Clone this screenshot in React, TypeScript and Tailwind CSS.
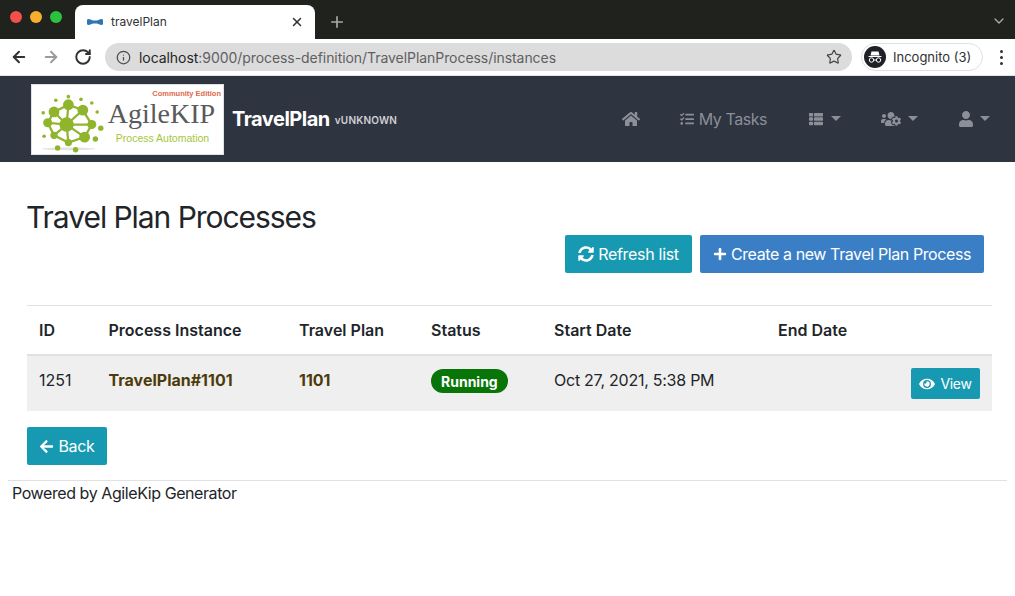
import { FaHome, FaTasks, FaThList, FaUsersCog, FaUser, FaSyncAlt, FaPlus, FaArrowLeft, FaEye } from 'react-icons/fa';
import { ArrowLeft, ArrowRight, RotateCw, Info, Star, X, Plus, ChevronDown } from 'lucide-react';

const columns = [
    { label: 'ID', width: 'w-[69.5px]' },
    { label: 'Process Instance', width: 'w-[190.5px]' },
    { label: 'Travel Plan', width: 'w-[132px]' },
    { label: 'Status', width: 'w-[123px]' },
    { label: 'Start Date', width: 'w-[224px]' },
    { label: 'End Date', width: 'flex-1' },
];

const globeLinks = 'M20 26L36 18L52 24L62 40L54 54L36 60L20 52L13 38Z M36 18L34 40L52 24 M34 40L20 52 M34 40L54 54 M34 40L13 38 M34 40L36 60 M62 40L34 40 M34 40L20 26';

const globeDots = [
    [34, 40, 8], [20, 26, 6], [36, 18, 6], [52, 24, 6], [62, 40, 5], [54, 54, 6], [36, 60, 4], [20, 52, 4],
    [13, 38, 5], [68, 26, 2], [72, 44, 3], [66, 56, 3], [44, 68, 3], [24, 66, 3], [9, 53, 2], [8, 27, 2],
    [22, 13, 2], [36, 9, 2], [50, 12, 2], [62, 16, 2],
];

const Caret = () => <span className="w-0 h-0 border-x-[5px] border-x-transparent border-t-[5px] border-t-[#8a8f98] ml-[7px] mb-[2px]"></span>;

const Logo = () => (
    <div className="w-[193px] h-[71px] bg-white border border-[#dee2e6] flex relative overflow-hidden shrink-0">
        <svg viewBox="0 0 80 71" className="w-[72px] h-[71px] ml-[4px] shrink-0">
            <ellipse cx="36" cy="67" rx="30" ry="1.5" fill="#e3e3e3" />
            <path d={globeLinks} fill="none" stroke="#8fb52d" strokeWidth="2.5" />
            {globeDots.map(([cx, cy, r], index) => (
                <circle key={index} cx={cx} cy={cy} r={r} fill="#8fb52d" />
            ))}
        </svg>
        <div className="flex flex-col items-center w-[113px]">
            <span className="font-['Liberation_Sans',sans-serif] font-bold text-[7.5px] leading-[9px] text-[#e0684a] mt-[4px] self-end whitespace-nowrap">Community Edition</span>
            <span className="font-['Liberation_Serif',serif] text-[28px] leading-[30px] text-[#5a5a5a] mt-[1px] -ml-[6px] whitespace-nowrap">AgileKIP</span>
            <span className="font-['Liberation_Sans',sans-serif] text-[10.5px] leading-[12px] text-[#a5c63b] mt-[3px] -ml-[4px] whitespace-nowrap">Process Automation</span>
        </div>
    </div>
);

const IncognitoIcon = () => (
    <svg viewBox="0 0 22 22" className="w-[22px] h-[22px]">
        <circle cx="11" cy="11" r="11" fill="#202124" />
        <path d="M7.5 5.5h7l1 4h-9zM4.5 10h13v1h-13z" fill="#fff" />
        <circle cx="7.5" cy="14" r="2.2" fill="none" stroke="#fff" strokeWidth="1" />
        <circle cx="14.5" cy="14" r="2.2" fill="none" stroke="#fff" strokeWidth="1" />
        <path d="M9.7 14h2.6" stroke="#fff" strokeWidth="1" />
    </svg>
);

const BrowserChrome = () => (
    <div className="font-['Inter',sans-serif]">
        <div className="h-[39px] bg-[#1f221d] flex items-end relative">
            <div className="flex gap-[8px] w-[75px] pl-[10px] pb-[16px]">
                <span className="w-[12px] h-[12px] rounded-full bg-[#f4504a]"></span>
                <span className="w-[12px] h-[12px] rounded-full bg-[#f6b02c]"></span>
                <span className="w-[12px] h-[12px] rounded-full bg-[#2ac23f]"></span>
            </div>
            <div className="w-[240px] h-[34px] bg-white rounded-t-[8px] flex items-center pl-[12px] pr-[11px]">
                <svg viewBox="0 0 16 8" className="w-[16px] h-[8px] shrink-0">
                    <path d="M0 2Q0 1 2 1L6 2.5H10L14 1Q16 1 16 2V6Q16 7 14 7L10 5.5H6L2 7Q0 7 0 6Z" fill="#2f74b5" />
                </svg>
                <span className="text-[12px] text-[#303134] ml-[8px] flex-1">travelPlan</span>
                <X className="w-[14px] h-[14px] text-[#303134]" strokeWidth={2.5} />
            </div>
            <Plus className="w-[18px] h-[18px] text-[#a9aaa8] ml-[13px] mb-[8px]" strokeWidth={2.2} />
            <ChevronDown className="absolute right-[8px] top-[13px] w-[16px] h-[16px] text-[#a9aaa8]" strokeWidth={2} />
        </div>
        <div className="h-[36px] bg-white flex items-center pl-[10px] pr-[8px] border-b border-[#e3e4e6] box-content">
            <ArrowLeft className="w-[18px] h-[18px] text-[#303134]" strokeWidth={2.6} />
            <ArrowRight className="w-[18px] h-[18px] text-[#9a9b9d] ml-[14px]" strokeWidth={2.6} />
            <RotateCw className="w-[18px] h-[18px] text-[#303134] ml-[14px]" strokeWidth={2.6} />
            <div className="h-[28px] w-[747px] ml-[13px] bg-[#dcdcdc] rounded-full flex items-center pl-[11px] pr-[10px]">
                <Info className="w-[15px] h-[15px] text-[#4a4b4d]" strokeWidth={2} />
                <span className="text-[14px] text-[#5f6062] ml-[8px] flex-1 whitespace-nowrap tracking-[-0.06px]"><span className="text-[#242527]">localhost</span>:9000/process-definition/TravelPlanProcess/instances</span>
                <Star className="w-[16px] h-[16px] text-[#45464a]" strokeWidth={1.8} />
            </div>
            <div className="h-[28px] ml-[9px] w-[122px] border border-[#dfe0e2] rounded-full flex items-center pl-[2px]">
                <IncognitoIcon />
                <span className="text-[13px] text-[#303134] ml-[7px] pt-[1px] whitespace-nowrap">Incognito (3)</span>
            </div>
            <div className="flex flex-col gap-[3px] ml-[17px]">
                <span className="w-[3px] h-[3px] rounded-full bg-[#303134]"></span>
                <span className="w-[3px] h-[3px] rounded-full bg-[#303134]"></span>
                <span className="w-[3px] h-[3px] rounded-full bg-[#303134]"></span>
            </div>
        </div>
    </div>
);

const Navbar = () => (
    <nav className="h-[86px] bg-[#2e3440] flex items-center pl-[31px] text-[#8a8f98]">
        <Logo />
        <span className="text-[20px] font-bold text-white ml-[8px] whitespace-nowrap tracking-[-0.5px]">TravelPlan</span>
        <span className="text-[10px] font-semibold text-[#d0d2d6] ml-[5px] mt-[3px] whitespace-nowrap tracking-[0.2px]">vUNKNOWN</span>
        <div className="flex items-center ml-auto mr-[25px] text-[16px]">
            <FaHome className="w-[18px] h-[16px]" />
            <FaTasks className="w-[16px] h-[14px] ml-[39px]" />
            <span className="ml-[4px] tracking-[-0.45px]">My Tasks</span>
            <FaThList className="w-[16px] h-[14px] ml-[41px]" />
            <Caret />
            <FaUsersCog className="w-[20px] h-[16px] ml-[40px]" />
            <Caret />
            <FaUser className="w-[14px] h-[16px] ml-[41px]" />
            <Caret />
        </div>
    </nav>
);

const ProcessTable = () => (
    <div className="mt-[26px] border-t border-[#dee2e6]">
        <div className="flex h-[48px] items-center border-b-2 border-[#dee2e6] px-[12px] font-semibold text-[#212529] box-content">
            {columns.map((col) => (
                <div key={col.label} className={col.width}>{col.label}</div>
            ))}
        </div>
        <div className="flex h-[55px] bg-[#efefef] items-center px-[12px] text-[#212529]">
            <div className="w-[69.5px] -mt-[7px]">1251</div>
            <div className="w-[190.5px] -mt-[7px] font-bold text-[#4d3c0b]">TravelPlan#1101</div>
            <div className="w-[132px] -mt-[7px] font-bold text-[#4d3c0b]">1101</div>
            <div className="w-[123px] -mt-[5px]">
                <span className="inline-flex items-center h-[24px] px-[10px] rounded-full bg-[#087508] text-white font-bold text-[14px]">Running</span>
            </div>
            <div className="w-[224px] -mt-[7px] whitespace-nowrap tracking-[-0.25px]">Oct 27, 2021, 5:38 PM</div>
            <div className="flex-1 flex justify-end">
                <button className="h-[31px] w-[69px] bg-[#179ab1] rounded-[2px] text-white text-[14px] tracking-[-0.3px] flex items-center justify-center gap-[5px]">
                    <FaEye className="w-[16px] h-[14px]" /> View
                </button>
            </div>
        </div>
    </div>
);

export default function App() {
    return (
        <div className="min-h-[596px] bg-white font-['Inter',sans-serif] text-[16px] text-[#212529] overflow-hidden">
            <BrowserChrome />
            <Navbar />
            <main className="px-[27px] pr-[23px]">
                <div className="flex justify-between items-end h-[117px]">
                    <h2 className="text-[30px] font-normal leading-[36px] mb-[44px] -ml-[1px] text-[#212529] tracking-[-1.05px]">Travel Plan Processes</h2>
                    <div className="flex gap-[8px] mr-[8px] mb-[6px]">
                        <button className="h-[38px] w-[127px] bg-[#179ab1] rounded-[2px] text-white tracking-[-0.3px] flex items-center justify-center gap-[4px]">
                            <FaSyncAlt className="w-[16px] h-[16px]" /> Refresh list
                        </button>
                        <button className="h-[38px] w-[284px] bg-[#3a7ec5] rounded-[2px] text-white tracking-[-0.4px] flex items-center justify-center gap-[4px] whitespace-nowrap">
                            <FaPlus className="w-[14px] h-[14px]" /> Create a new Travel Plan Process
                        </button>
                    </div>
                </div>
                <ProcessTable />
                <button className="mt-[16px] h-[38px] w-[80px] bg-[#179ab1] rounded-[2px] text-white tracking-[-0.3px] flex items-center justify-center gap-[4px]">
                    <FaArrowLeft className="w-[15px] h-[15px]" /> Back
                </button>
            </main>
            <footer className="mt-[15px] mx-[8px] mr-[8px] border-t border-[#dee2e6] pl-[4px] text-[#212529] leading-[24px] tracking-[-0.42px]">
                Powered by AgileKip Generator
            </footer>
        </div>
    );
}
